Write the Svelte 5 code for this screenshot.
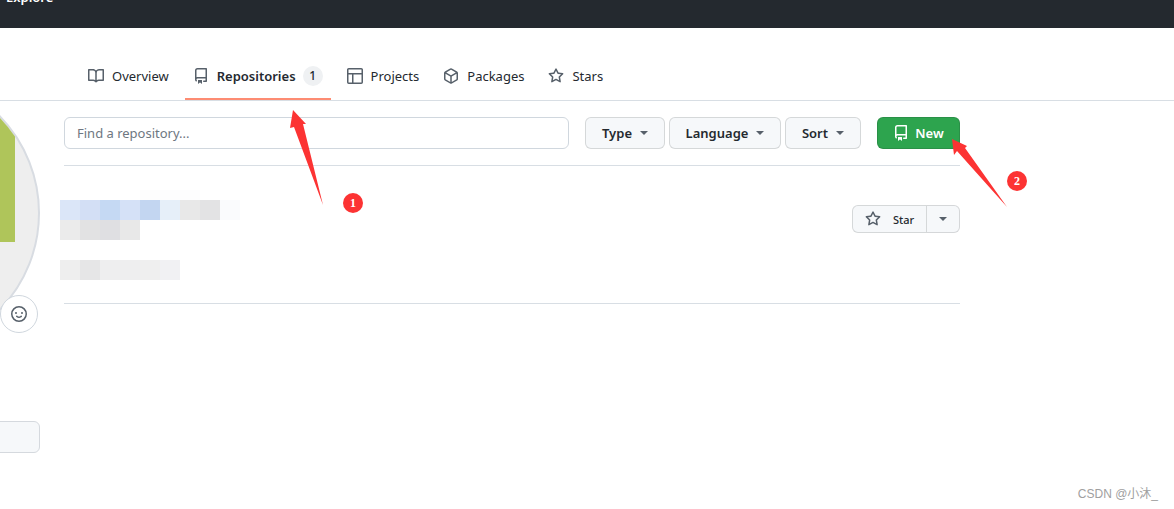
<script>
	const icons = {
		book: "M0 1.75A.75.75 0 01.75 1h4.253c1.227 0 2.317.59 3 1.501A3.744 3.744 0 0111.006 1h4.245a.75.75 0 01.75.75v10.5a.75.75 0 01-.75.75h-4.507a2.25 2.25 0 00-1.591.659l-.622.621a.75.75 0 01-1.06 0l-.622-.621A2.25 2.25 0 005.258 13H.75a.75.75 0 01-.75-.75V1.75zm8.755 3a2.25 2.25 0 012.25-2.25H14.5v9h-3.757c-.71 0-1.4.201-1.992.572l.004-7.322zm-1.504 7.324l.004-5.073-.002-2.253A2.25 2.25 0 005.003 2.5H1.5v9h3.757a3.75 3.75 0 011.994.574z",
		repo: "M2 2.5A2.5 2.5 0 014.5 0h8.75a.75.75 0 01.75.75v12.5a.75.75 0 01-.75.75h-2.5a.75.75 0 110-1.5h1.75v-2h-8a1 1 0 00-.714 1.7.75.75 0 01-1.072 1.05A2.495 2.495 0 012 11.5v-9zm10.5-1V9h-8c-.356 0-.694.074-1 .208V2.5a1 1 0 011-1h8zM5 12.25v3.25a.25.25 0 00.4.2l1.45-1.087a.25.25 0 01.3 0L8.6 15.7a.25.25 0 00.4-.2v-3.25a.25.25 0 00-.25-.25h-3.5a.25.25 0 00-.25.25z",
		table: "M0 1.75C0 .784.784 0 1.75 0h12.5C15.216 0 16 .784 16 1.75v12.5A1.75 1.75 0 0114.25 16H1.75A1.75 1.75 0 010 14.25V1.75zM6.5 6.5v8h7.75a.25.25 0 00.25-.25V6.5h-8zM5 6.5H1.5v7.75c0 .138.112.25.25.25H5v-8zM14.5 5V1.75a.25.25 0 00-.25-.25H1.75a.25.25 0 00-.25.25V5h13z",
		pkg: "M8.878.392a1.75 1.75 0 00-1.756 0l-5.25 3.045A1.75 1.75 0 001 4.951v6.098c0 .624.332 1.2.872 1.514l5.25 3.045a1.75 1.75 0 001.756 0l5.25-3.045c.54-.313.872-.89.872-1.514V4.951c0-.624-.332-1.2-.872-1.514L8.878.392zM7.875 1.69a.25.25 0 01.25 0l4.63 2.685L8 7.133 3.245 4.375l4.63-2.685zM2.5 5.677v5.372c0 .09.047.171.125.216l4.625 2.683V8.432L2.5 5.677zm6.25 8.271l4.625-2.683a.25.25 0 00.125-.216V5.677L8.75 8.432v5.516z",
		star: "M8 .25a.75.75 0 01.673.418l1.882 3.815 4.21.612a.75.75 0 01.416 1.279l-3.046 2.97.719 4.192a.75.75 0 01-1.088.791L8 12.347l-3.766 1.98a.75.75 0 01-1.088-.79l.72-4.194L.818 6.374a.75.75 0 01.416-1.28l4.21-.611L7.327.668A.75.75 0 018 .25zm0 2.445L6.615 5.5a.75.75 0 01-.564.41l-3.097.45 2.24 2.184a.75.75 0 01.216.664l-.528 3.084 2.769-1.456a.75.75 0 01.698 0l2.77 1.456-.53-3.084a.75.75 0 01.216-.664l2.24-2.183-3.096-.45a.75.75 0 01-.564-.41L8 2.694v.001z",
		smiley: "M1.5 8a6.5 6.5 0 1113 0 6.5 6.5 0 01-13 0zM8 0a8 8 0 100 16A8 8 0 008 0zM5 8a1 1 0 100-2 1 1 0 000 2zm7-1a1 1 0 11-2 0 1 1 0 012 0zM5.32 9.636a.75.75 0 011.038.175l.007.009c.103.118.22.222.35.31.264.178.683.37 1.285.37.602 0 1.02-.192 1.285-.371.13-.088.247-.192.35-.31l.007-.008a.75.75 0 111.222.87l-.614-.431c.614.43.614.431.613.431v.001l-.001.002-.002.003-.005.007-.014.019a1.984 1.984 0 01-.184.213c-.16.166-.338.316-.53.445-.63.418-1.37.638-2.127.629-.946 0-1.652-.308-2.126-.63a3.32 3.32 0 01-.715-.657l-.014-.02-.005-.006-.002-.003v-.002h-.001l.613-.432-.614.43a.75.75 0 01.183-1.044h.001z"
	};

	const tabs = [
		{ label: "Overview", icon: "book" },
		{ label: "Repositories", icon: "repo", active: true, count: 1 },
		{ label: "Projects", icon: "table" },
		{ label: "Packages", icon: "pkg" },
		{ label: "Stars", icon: "star" }
	];

	const filters = [
		{ label: "Type", width: 80 },
		{ label: "Language", width: 112 },
		{ label: "Sort", width: 76 }
	];

	// the blurred out repo name / description
	const mosaic = [
		["#fff", "#fff", "#fff", "#fff", "#fdfdfd", "#fdfdfe", "#fdfdfe", "#fff", "#fff"],
		["#dbe6f8", "#d3dff5", "#c5d9f3", "#d5e1f7", "#c3d6f1", "#e6eff9", "#e8e8e8", "#e3e3e4", "#fafbfd"],
		["#ebebeb", "#e2e2e3", "#dfdfe2", "#e8e8e8", "#fff", "#fff", "#fff", "#fff", "#fff"],
		["#fff", "#fff", "#fff", "#fff", "#fff", "#fff", "#fff", "#fff", "#fff"],
		["#eeeeee", "#e6e6e7", "#eeeeef", "#eeeeef", "#efefef", "#f1f1f3", "#fff", "#fff", "#fff"]
	];
</script>

{#snippet octicon(name, size = 16)}
	<svg class="icon" width={size} height={size} viewBox="0 0 16 16" fill="currentColor" aria-hidden="true">
		<path fill-rule="evenodd" d={icons[name]} />
	</svg>
{/snippet}

<div class="page">
	<header class="topbar"><span class="explore">Explore</span></header>

	<nav class="tabs">
		{#each tabs as tab}
			<div class="tab" class:active={tab.active}>
				<span class="tab-icon">{@render octicon(tab.icon)}</span>
				<span class="tab-label">{tab.label}</span>
				{#if tab.count}<span class="counter">{tab.count}</span>{/if}
			</div>
		{/each}
	</nav>

	<div class="layout">
		<aside class="sidebar">
			<div class="avatar"><div class="avatar-mark"></div></div>
			<div class="status">{@render octicon("smiley", 16)}</div>
			<div class="edit-btn"></div>
		</aside>

		<main class="content">
			<div class="filter-bar">
				<input class="search" type="text" placeholder="Find a repository..." />
				<div class="filters">
					{#each filters as f}
						<button class="btn" style="width: {f.width}px">{f.label}<span class="caret"></span></button>
					{/each}
				</div>
				<button class="btn new">{@render octicon("repo", 16)}New</button>
			</div>

			<div class="repo-row">
				<div class="mosaic">
					{#each mosaic as row}
						{#each row as c}
							<span style="background: {c}"></span>
						{/each}
					{/each}
				</div>
				<div class="star-group">
					<button class="star-btn">{@render octicon("star", 16)}<span>Star</span></button>
					<button class="star-more"><span class="caret"></span></button>
				</div>
			</div>
		</main>
	</div>

	<!-- annotations drawn over the screenshot -->
	<svg class="marks" width="1174" height="509" viewBox="0 0 1174 509">
		<polygon points="293,110 306,124 303,124 323,205 294,127 290,128" fill="#fc3333" />
		<circle cx="353" cy="203" r="10" fill="#fc3333" />
		<polygon points="952,139 967,146 965,148 1007,207 957,151 954,155" fill="#fc3333" />
		<circle cx="1017" cy="181" r="10" fill="#fc3333" />
		<text x="353" y="207" class="mark-num">1</text>
		<text x="1017" y="185" class="mark-num">2</text>
	</svg>

	<div class="watermark">CSDN @小沐_</div>
</div>

<style>
	:global(body) {
		margin: 0;
		background: #fff;
		overflow: hidden;
	}

	.page {
		position: relative;
		width: 1174px;
		height: 509px;
		overflow: hidden;
		font-family: "Noto Sans", "Open Sans", sans-serif;
		font-size: 13px;
		color: #24292f;
	}

	.icon {
		display: block;
		flex: none;
	}

	.topbar {
		height: 28px;
		background: #24292f;
		overflow: hidden;
	}
	.explore {
		display: block;
		margin: -13px 0 0 6px;
		line-height: 20px;
		color: #fff;
		font-weight: 600;
	}

	.tabs {
		display: flex;
		height: 72px;
		padding-left: 80px;
		border-bottom: 1px solid #d8dee4;
	}
	.tab {
		display: flex;
		align-items: center;
		height: 72px;
		margin-right: 8px;
		margin-bottom: -1px;
		padding: 25px 8px 0;
		box-sizing: border-box;
		border-bottom: 2px solid transparent;
	}
	.tab.active {
		border-bottom-color: #fd8c73;
		font-weight: 600;
	}
	.tab-icon {
		color: #57606a;
		margin-right: 8px;
	}
	.counter {
		display: inline-block;
		min-width: 20px;
		height: 20px;
		margin-left: 7px;
		border-radius: 10px;
		background: #eff1f3;
		font-size: 12px;
		font-weight: 500;
		line-height: 20px;
		text-align: center;
	}

	.layout {
		display: flex;
	}
	.sidebar {
		position: relative;
		width: 40px;
		flex: none;
		height: 408px;
		margin-right: 24px;
	}
	.avatar {
		box-sizing: border-box;
		position: absolute;
		right: 0;
		top: -28px;
		width: 280px;
		height: 280px;
		border-radius: 50%;
		border: 2px solid #d8dce2;
		background: #eee;
		overflow: hidden;
	}
	.avatar-mark {
		position: absolute;
		right: 23px;
		top: 14px;
		width: 140px;
		height: 153px;
		background: #afc55a;
	}
	.status {
		position: absolute;
		right: 2px;
		top: 194px;
		width: 38px;
		height: 38px;
		box-sizing: border-box;
		display: flex;
		align-items: center;
		justify-content: center;
		border: 1px solid #d0d7de;
		border-radius: 50%;
		background: #fff;
		color: #57606a;
	}
	.edit-btn {
		position: absolute;
		right: 0;
		top: 320px;
		width: 60px;
		height: 32px;
		box-sizing: border-box;
		border: 1px solid #d5d9de;
		border-radius: 6px;
		background: #f6f8fa;
	}

	.content {
		width: 896px;
		flex: none;
	}
	.filter-bar {
		display: flex;
		align-items: center;
		height: 32px;
		padding: 16px 0;
		border-bottom: 1px solid #d8dee4;
	}
	.search {
		box-sizing: border-box;
		width: 505px;
		height: 32px;
		margin-right: 16px;
		padding: 0 12px;
		border: 1px solid #d0d7de;
		border-radius: 6px;
		font: inherit;
		color: inherit;
		outline: none;
	}
	.search::placeholder {
		color: #6e7781;
		opacity: 1;
	}
	.filters {
		display: flex;
		gap: 4px;
		margin-right: 16px;
	}
	.btn {
		box-sizing: border-box;
		display: flex;
		align-items: center;
		justify-content: center;
		height: 32px;
		padding: 0;
		border: 1px solid rgba(27, 31, 36, 0.15);
		border-radius: 6px;
		background: #f6f8fa;
		font: inherit;
		font-weight: 600;
		color: inherit;
	}
	.caret {
		display: inline-block;
		width: 0;
		height: 0;
		margin-left: 8px;
		border-style: solid;
		border-width: 4px 4px 0;
		border-color: #57606a transparent transparent;
	}
	.btn.new {
		width: 83px;
		gap: 6px;
		background: #2da44e;
		color: #fff;
	}

	.repo-row {
		height: 137px;
		border-bottom: 1px solid #d8dee4;
		display: flex;
		justify-content: space-between;
		align-items: flex-start;
	}
	.mosaic {
		display: grid;
		grid-template-columns: repeat(9, 20px);
		grid-template-rows: 10px repeat(4, 20px);
		margin: 24px 0 0 -4px;
	}
	.star-group {
		display: flex;
		margin-top: 39px;
	}
	.star-btn,
	.star-more {
		box-sizing: border-box;
		display: flex;
		align-items: center;
		height: 28px;
		padding: 0;
		border: 1px solid rgba(27, 31, 36, 0.15);
		background: #f6f8fa;
		font: inherit;
		font-size: 11px;
		font-weight: 500;
		color: inherit;
	}
	.star-btn {
		width: 75px;
		padding-left: 12px;
		gap: 12px;
		border-radius: 6px 0 0 6px;
	}
	.star-btn :global(svg) {
		color: #57606a;
	}
	.star-more {
		width: 33px;
		justify-content: center;
		border-left: 0;
		border-radius: 0 6px 6px 0;
	}
	.star-more .caret {
		margin-left: 0;
	}

	.marks {
		position: absolute;
		left: 0;
		top: 0;
		pointer-events: none;
	}
	.mark-num {
		fill: #fff;
		font-family: "Liberation Serif", serif;
		font-size: 12px;
		font-weight: 700;
		text-anchor: middle;
	}

	.watermark {
		position: absolute;
		right: 16px;
		top: 486px;
		font-family: "Liberation Sans", "Noto Sans CJK SC", sans-serif;
		font-size: 12px;
		line-height: 16px;
		color: #a0a0a0;
	}
</style>
